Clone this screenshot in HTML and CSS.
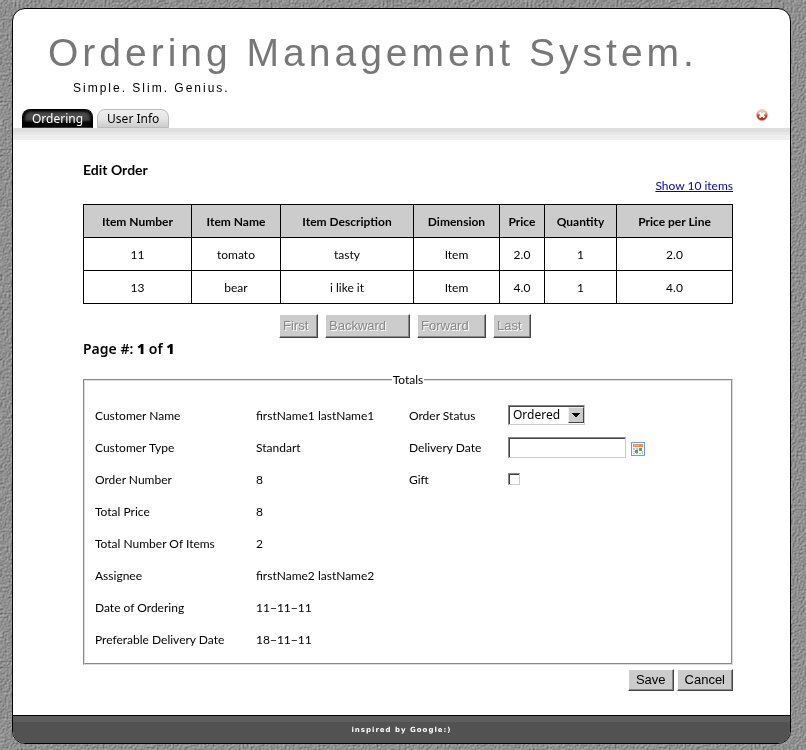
FILE: index.html
```
<!DOCTYPE html>
<html lang="en">
<head>
<meta charset="utf-8">
<title>Ordering Management System</title>
<link rel="stylesheet" href="styles.css">
</head>
<body>
<svg class="texture" aria-hidden="true">
  <filter id="stone" x="0" y="0" width="100%" height="100%" color-interpolation-filters="sRGB">
    <feTurbulence type="fractalNoise" baseFrequency="0.5" numOctaves="3" seed="4" result="n"/>
    <feDiffuseLighting in="n" surfaceScale="0.8" diffuseConstant="0.92" lighting-color="#cccccc">
      <feDistantLight azimuth="225" elevation="50"/>
    </feDiffuseLighting>
  </filter>
  <rect width="100%" height="100%" filter="url(#stone)"/>
</svg>
<div class="page">
  <header>
    <h1>Ordering Management System.</h1>
    <p class="slogan">Simple. Slim. Genius.</p>
    <nav class="tabs">
      <a href="#" class="tab active">Ordering</a>
      <a href="#" class="tab">User Info</a>
      <button class="close" type="button" aria-label="Log out">
        <svg viewBox="0 0 12 12" width="12" height="12">
          <defs><linearGradient id="red" x1="0" y1="0" x2="0" y2="1"><stop offset="0" stop-color="#f7e3c8"/><stop offset=".35" stop-color="#e8a07c"/><stop offset=".6" stop-color="#cc3322"/><stop offset="1" stop-color="#a92c1c"/></linearGradient></defs>
          <circle cx="6" cy="6" r="5.5" fill="url(#red)" stroke="#d9a392" stroke-width=".5"/>
          <path d="M3.500 3.500l5 5M8.500 3.500l-5 5" stroke="#fff" stroke-width="2.400"/>
        </svg>
      </button>
    </nav>
  </header>
  <div class="strip"></div>
  <main>
    <h2>Edit Order</h2>
    <a class="show" href="#">Show 10 items</a>
    <table>
      <colgroup><col class="c1"><col class="c2"><col class="c3"><col class="c4"><col class="c5"><col class="c6"><col class="c7"></colgroup>
      <thead><tr><th>Item Number</th><th>Item Name</th><th>Item Description</th><th>Dimension</th><th>Price</th><th>Quantity</th><th>Price per Line</th></tr></thead>
      <tbody>
        <tr><td>11</td><td>tomato</td><td>tasty</td><td>Item</td><td>2.0</td><td>1</td><td>2.0</td></tr>
        <tr><td>13</td><td>bear</td><td>i like it</td><td>Item</td><td>4.0</td><td>1</td><td>4.0</td></tr>
      </tbody>
    </table>
    <div class="pager">
      <button class="btn first" disabled>First</button>
      <button class="btn backward" disabled>Backward</button>
      <button class="btn forward" disabled>Forward</button>
      <button class="btn last" disabled>Last</button>
    </div>
    <p class="pageno">Page #: <b>1</b> of <b>1</b></p>
    <form>
      <fieldset>
        <legend>Totals</legend>
        <div class="grid">
          <span>Customer Name</span><span>firstName1 lastName1</span>
          <label for="status">Order Status</label>
          <div class="select"><select id="status"><option>Ordered</option></select><svg class="arrow" viewBox="0 0 14 14" width="16" height="16" aria-hidden="true"><path d="M3 5h8v1h-1v1H9v1H8v1H6V8H5V7H4V6H3z" fill="#000"/></svg></div>
          <span>Customer Type</span><span>Standart</span>
          <label for="date">Delivery Date</label>
          <div class="date"><input id="date" type="text">
            <svg viewBox="0 0 14 14" width="14" height="14" aria-hidden="true">
              <rect x=".5" y=".5" width="13" height="13" fill="#f3f8ff" stroke="#6a9fd8"/>
              <path d="M2 2h10v3H2z" fill="#f58b4c"/><path d="M3 3h5v1H3z" fill="#ffc84c"/>
              <path d="M2 6h2v2H2zM5 6h2v2H5zM8 6h1v1H8zM2 9h2v1H2zM2 11h2v1H2zM5 11h2v1H5zM8 11h2v1H8zM11 9h1v3h-1z" fill="#a9c5e8"/>
              <path d="M8 6h3v3H8zM4 8h3v3H4z" fill="#52a855"/>
            </svg>
          </div>
          <span>Order Number</span><span>8</span>
          <label for="gift">Gift</label>
          <div class="gift"><input id="gift" type="checkbox"></div>
          <span>Total Price</span><span class="rest">8</span>
          <span>Total Number Of Items</span><span class="rest">2</span>
          <span>Assignee</span><span class="rest">firstName2 lastName2</span>
          <span>Date of Ordering</span><span class="rest">11−11−11</span>
          <span>Preferable Delivery Date</span><span class="rest">18−11−11</span>
        </div>
      </fieldset>
      <div class="actions">
        <button class="btn" type="button">Save</button>
        <button class="btn" type="button">Cancel</button>
      </div>
    </form>
  </main>
  <footer>inspired by Google:)</footer>
</div>
</body>
</html>
```
FILE: styles.css
```
* { box-sizing: border-box; }
body {
  margin: 0;
  padding: 8px 15px 6px 12px;
  background: #909090;
  color: #000;
  font: 12px/16px Lato, sans-serif;
}
.texture { position: fixed; inset: 0; width: 100%; height: 100%; z-index: -1; }
.page {
  background: #fff;
  border: 1px solid #000;
  border-radius: 13px;
  overflow: hidden;
}
h1 {
  margin: 0;
  padding: 20px 0 0 35px;
  color: #777;
  font: 39px/48px "Liberation Sans", sans-serif;
  letter-spacing: 4px;
  white-space: nowrap;
}
.slogan {
  margin: 3px 0 0 60px;
  font: 12px/16px "Liberation Sans", sans-serif;
  letter-spacing: 2px;
}
.tabs { display: flex; gap: 4px; margin: 13px 22px 0 9px; }
.tab {
  height: 19px;
  padding: 0 9px;
  border: 1px solid #bbb;
  border-radius: 8px 8px 0 0;
  background: linear-gradient(#eee, #e6e6e6 50%, #ccc);
  color: #000;
  font: 12px/18px "Noto Sans", sans-serif;
  text-decoration: none;
}
.active {
  border: 1px solid #000;
  border-bottom-color: #1c3c70;
  background: linear-gradient(#555, #444 55%, #000 75%);
  box-shadow: inset 0 0 3px 2px #000;
  color: #fff;
}
.close { align-self: flex-start; width: 12px; height: 12px; margin-left: auto; padding: 0; border: 0; background: none; }
.close svg { display: block; }
.strip { height: 12px; background: linear-gradient(#dfdfdf 4px, #e7e7e7 4px 7px, #efefef 7px); }
main { padding: 20px 57px 24px 70px; }
h2 { margin: 0; font-size: 14px; line-height: 20px; }
.show { display: block; width: max-content; margin: -3px 0 10px auto; line-height: 17px; color: #00c; }
table { width: 100%; border-collapse: collapse; table-layout: fixed; }
th, td { height: 33px; padding: 2px 0 0; border: 1px solid #000; text-align: center; }
th { background: #ccc; }
.c1 { width: 108px; }
.c2 { width: 89px; }
.c3 { width: 133px; }
.c4 { width: 86px; }
.c5 { width: 45px; }
.c6 { width: 72px; }
.pager { display: flex; justify-content: center; gap: 7px; margin-top: 10px; padding-right: 6px; }
.btn {
  height: 22px;
  padding: 0 7px;
  border: 1px solid;
  border-color: #fff #444 #444 #fff;
  background: #ccc;
  box-shadow: inset -1px -1px #888;
  color: #000;
  font: 13px/18px "Liberation Sans", sans-serif;
}
.pager .btn { height: 24px; padding: 0 3px; color: #888; text-align: left; text-shadow: 1px 1px #fff; }
.first { width: 39px; }
.backward { width: 85px; }
.forward { width: 69px; }
.last { width: 38px; }
.pageno { margin: 0; font: 600 14px/22px "Noto Sans", sans-serif; }
fieldset { margin: 12px 0 0; padding: 11px 10px 8px; border: 2px groove #ddd; }
legend { margin: 0 auto; padding: 0 1px; }
.grid {
  display: grid;
  grid-template-columns: 161px 153px 99px 1fr;
  grid-auto-rows: 32px;
  align-items: center;
}
.grid > span, .grid > label { padding-top: 2px; }
.rest { grid-column: 2 / -1; }
.select { position: relative; width: 77px; height: 20px; }
.select select {
  width: 100%;
  height: 100%;
  padding: 0 4px;
  appearance: none;
  border: 1px solid;
  border-color: #888 #ccc #ccc #888;
  border-radius: 0;
  box-shadow: inset 1px 1px #444;
  background: #fff;
  color: #000;
  font: 12px/16px "Noto Sans", sans-serif;
}
.arrow {
  position: absolute;
  top: 2px;
  right: 1px;
  border: 1px solid;
  border-color: #eee #444 #444 #eee;
  background: #ccc;
  pointer-events: none;
}
.date { display: flex; align-items: center; gap: 5px; }
.date svg { margin-top: 3px; }
.date input { width: 118px; height: 21px; border: 1px solid; border-color: #888 #ccc #ccc #888; box-shadow: inset 1px 1px #444; }
.gift input { display: block; appearance: none; width: 12px; height: 12px; margin: 0; border: 1px solid; border-color: #888 #ccc #ccc #888; box-shadow: inset 1px 1px #444; background: #fff; }
.actions { display: flex; justify-content: flex-end; gap: 3px; margin-top: 4px; }
footer {
  height: 28px;
  border-top: 1px solid #000;
  background: linear-gradient(#5e5e5e 6px, #525252 6px);
  color: #fff;
  font: bold 7px/28px "DejaVu Sans", sans-serif;
  letter-spacing: 1px;
  text-align: center;
}
```
